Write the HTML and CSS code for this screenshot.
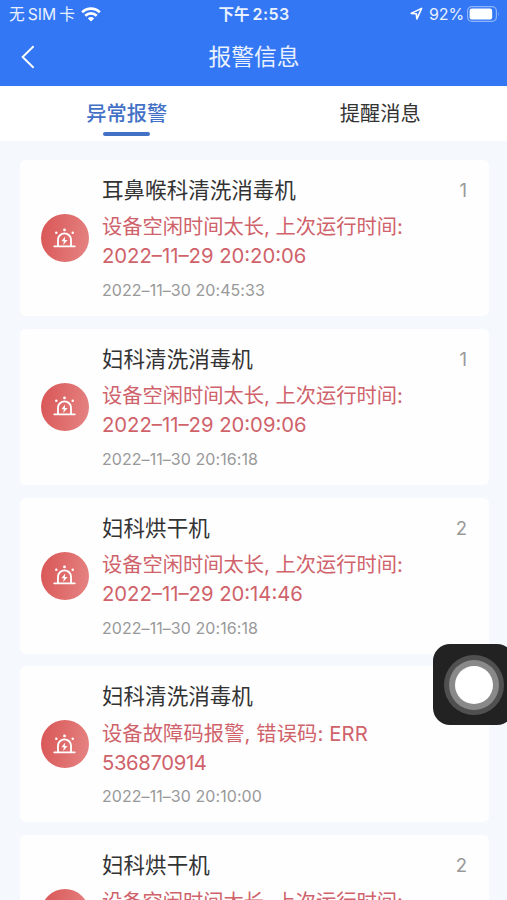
FILE: index.html
```html
<!DOCTYPE html>
<html lang="zh-CN">
<head>
<meta charset="utf-8">
<meta name="viewport" content="width=device-width, initial-scale=1">
<title>报警信息</title>
<link rel="stylesheet" href="styles.css">
</head>
<body>
<svg class="defs" aria-hidden="true">
  <symbol id="alarm" viewBox="0 0 24 24">
    <g fill="none" stroke="#fff" stroke-linecap="round" stroke-linejoin="round">
      <path stroke-width="1.9" d="M1.3 20.2h21.4"/>
      <path stroke-width="1.9" d="M5.2 20V13.4a6.8 6.8 0 0 1 13.6 0V20"/>
    </g>
    <path fill="#fff" d="M12.7 9.8 8.8 14.8h2.5l-.6 3.9 4.5-5.2h-2.8z"/>
    <circle cx="12" cy="3" r="1.5" fill="#fff"/>
    <circle cx="3.4" cy="5.9" r="1.3" fill="#fff"/>
    <circle cx="20.6" cy="5.9" r="1.3" fill="#fff"/>
  </symbol>
</svg>
<div class="app">
  <header class="header">
    <div class="status">
      <div class="carrier"><span>无<b class="sim">SIM</b>卡</span>
        <svg class="wifi" viewBox="0 0 20 15"><g fill="none" stroke="#fff" stroke-width="2.7"><path d="M1.2 5.3a12.5 12.5 0 0 1 17.6 0"/><path d="M4.3 8.8a8.1 8.1 0 0 1 11.4 0"/></g><path fill="#fff" d="M10 14.6 6.9 11.4a4.4 4.4 0 0 1 6.2 0z"/></svg>
      </div>
      <div class="clock">下午<span class="digits">2:53</span></div>
      <div class="power">
        <svg class="locate" viewBox="0 0 13 13"><path d="M1.2 6.4 11.6 1.4 6.9 11.8 6.3 6.8z" fill="none" stroke="#fff" stroke-width="1.6" stroke-linejoin="round"/></svg>
        <span class="percent">92%</span>
        <svg class="battery" viewBox="0 0 33 16"><rect x=".6" y=".6" width="28.8" height="14.8" rx="4.3" fill="none" stroke="#8fb4fb" stroke-width="1.2"/><rect x="2.6" y="2.6" width="22.6" height="10.8" rx="2.2" fill="#fff"/><path d="M31 5.4q1.6 2.6 0 5.2z" fill="#8fb4fb"/></svg>
      </div>
    </div>
    <div class="navbar">
      <svg class="back" viewBox="0 0 14 24"><path d="M12.6 1.2 1.6 12l11 10.8" fill="none" stroke="#fff" stroke-width="1.9"/></svg>
      <h1>报警信息</h1>
    </div>
  </header>
  <nav class="tabs">
    <div class="tab active">异常报警</div>
    <div class="tab">提醒消息</div>
  </nav>
  <main class="list">
    <article class="card">
      <div class="badge"><svg><use href="#alarm"/></svg></div>
      <div class="body">
        <div class="head"><h2>耳鼻喉科清洗消毒机</h2><span class="count">1</span></div>
        <p class="message">设备空闲时间太长, 上次运行时间:<br><span class="date">2022–11–29 20:20:06</span></p>
        <time>2022–11–30 20:45:33</time>
      </div>
    </article>
    <article class="card">
      <div class="badge"><svg><use href="#alarm"/></svg></div>
      <div class="body">
        <div class="head"><h2>妇科清洗消毒机</h2><span class="count">1</span></div>
        <p class="message">设备空闲时间太长, 上次运行时间:<br><span class="date">2022–11–29 20:09:06</span></p>
        <time>2022–11–30 20:16:18</time>
      </div>
    </article>
    <article class="card">
      <div class="badge"><svg><use href="#alarm"/></svg></div>
      <div class="body">
        <div class="head"><h2>妇科烘干机</h2><span class="count">2</span></div>
        <p class="message">设备空闲时间太长, 上次运行时间:<br><span class="date">2022–11–29 20:14:46</span></p>
        <time>2022–11–30 20:16:18</time>
      </div>
    </article>
    <article class="card">
      <div class="badge"><svg><use href="#alarm"/></svg></div>
      <div class="body">
        <div class="head"><h2>妇科清洗消毒机</h2></div>
        <p class="message fault">设备故障码报警, 错误码: ERR<br><span class="code">536870914</span></p>
        <time>2022–11–30 20:10:00</time>
      </div>
    </article>
    <article class="card">
      <div class="badge"><svg><use href="#alarm"/></svg></div>
      <div class="body">
        <div class="head"><h2>妇科烘干机</h2><span class="count">2</span></div>
        <p class="message">设备空闲时间太长, 上次运行时间:</p>
      </div>
    </article>
  </main>
  <div class="touch"><div class="ring"></div></div>
</div>
</body>
</html>
```
FILE: styles.css
```css
* { box-sizing: border-box; margin: 0; padding: 0; }
body { font-family: Inter, "Noto Sans CJK SC", sans-serif; overflow: hidden; }
.defs { position: absolute; width: 0; height: 0; }
.app { position: relative; height: 900px; overflow: hidden; background: #f5f9fd; }
.header { height: 86px; background: #3377f4; color: #e9f1ff; }
.status { display: grid; grid-template-columns: 1fr auto 1fr; align-items: center; height: 28px; padding: 0 8px 0 9px; font-size: 16px; line-height: 28px; }
.carrier, .power { display: flex; align-items: center; }
.carrier { gap: 6px; }
.carrier span { font-size: 15.7px; }
.sim { font-weight: 400; margin: 0 3px; }
.wifi { width: 20px; height: 15px; margin-top: -1px; }
.clock { font-weight: 600; font-size: 15.5px; white-space: nowrap; }
.digits { margin-left: 3px; font-size: 16px; letter-spacing: .4px; }
.power { justify-content: flex-end; margin-top: -2px; }
.locate { width: 13px; height: 13px; margin-right: 6px; }
.percent { letter-spacing: -.1px; margin-right: 3px; }
.battery { width: 33px; height: 16px; margin-right: -1px; }
.navbar { display: grid; grid-template-columns: 40px 1fr 40px; align-items: center; height: 58px; padding: 0 0 0 1px; }
.back { width: 14px; height: 24px; margin-left: 20px; }
.navbar h1 { text-align: center; font-weight: 400; font-size: 22.8px; line-height: 34px; }
.tabs { display: grid; grid-template-columns: 1fr 1fr; height: 55px; background: #fff; color: #333; font-size: 20.2px; line-height: 56px; text-align: center; }
.tab { height: 55px; }
.tab.active { color: #4371c6; font-weight: 500; }
.tab.active::after { content: ""; display: block; width: 47px; height: 4px; margin: -10px auto 0; border-radius: 2px; background: #4371c6; }
.list { display: flex; flex-direction: column; gap: 12.7px; padding: 19.3px 18px 0 20px; }
.card { display: flex; flex: none; height: 156px; padding: 15px 22px 0 20.5px; border-radius: 6px; background: #fefeff; }
.badge { display: flex; flex: none; align-items: center; justify-content: center; width: 48px; height: 48px; margin: 39px 13.5px 0 0; border-radius: 50%; background: linear-gradient(100deg, #d95555, #e58584); }
.badge svg { width: 23px; height: 23px; }
.body { flex: 1; min-width: 0; }
.head { display: flex; justify-content: space-between; align-items: center; height: 30px; }
.head h2 { font-weight: 400; font-size: 21.55px; line-height: 30px; color: #333; }
.count { font-size: 18.5px; color: #999; }
.message { margin-top: 7.2px; font-size: 20.25px; line-height: 29px; color: #cf626a; white-space: nowrap; }
.fault { letter-spacing: .12px; }
.date { letter-spacing: 0; }
.code { letter-spacing: -.35px; }
time { display: block; margin-top: 9.8px; font-size: 16px; line-height: 20px; letter-spacing: .06px; color: #999; }
.touch { position: absolute; left: 433px; top: 644px; display: flex; align-items: center; justify-content: center; width: 81px; height: 81px; border-radius: 17px; background: #222; }
.ring { width: 38px; height: 38px; border-radius: 50%; background: #fff; box-shadow: 0 0 0 6px #898989, 0 0 0 11px #505050; }
```
